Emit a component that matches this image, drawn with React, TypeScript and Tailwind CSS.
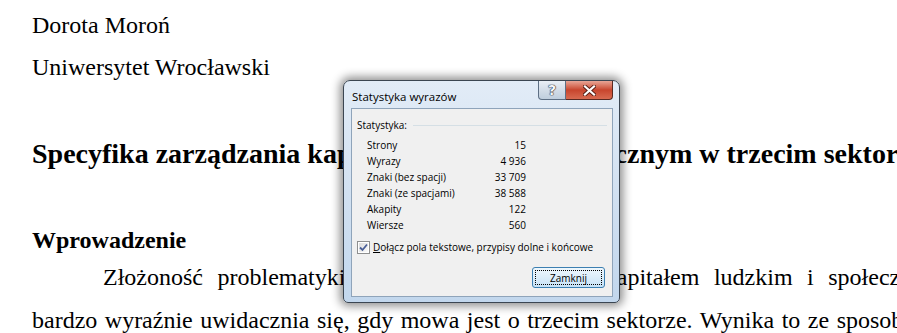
import React from 'react'

const stats = [
  { label: 'Strony', value: '15' },
  { label: 'Wyrazy', value: '4\u00a0936' },
  { label: 'Znaki (bez spacji)', value: '33\u00a0709' },
  { label: 'Znaki (ze spacjami)', value: '38\u00a0588' },
  { label: 'Akapity', value: '122' },
  { label: 'Wiersze', value: '560' },
]

function TitleButtons() {
  return (
    <div className="ml-auto mr-[6px] flex h-[19px]">
      <div className="w-[28px] h-[19px] rounded-bl-[4px] border border-t-0 border-[#5d6f84] bg-gradient-to-b from-[#e9eff6] via-[#d3dde8] to-[#bfcedd] flex items-center justify-center">
        <span className="text-[14px] leading-none font-bold text-[#f4f7fa] [text-shadow:0_0_1px_#223,0_0_1px_#223,0_0_1px_#223] font-['DejaVu_Sans',sans-serif]">?</span>
      </div>
      <div className="w-[47px] h-[19px] rounded-br-[4px] border border-t-0 border-l-0 border-[#5a2a22] bg-gradient-to-b from-[#e8a596] via-[#c8452d] to-[#d86a50] flex items-center justify-center">
        <svg width="13" height="11" viewBox="0 0 13 11">
          <path d="M2 1.5 L11 9.5 M11 1.5 L2 9.5" stroke="#5a1f15" strokeWidth="4" strokeLinecap="square" />
          <path d="M2 1.5 L11 9.5 M11 1.5 L2 9.5" stroke="#ffffff" strokeWidth="2.2" strokeLinecap="square" />
        </svg>
      </div>
    </div>
  )
}

function CheckBox() {
  return (
    <div className="w-[13px] h-[13px] border border-[#8e8f8f] bg-white p-[1px] flex-shrink-0">
      <div className="w-full h-full bg-gradient-to-br from-[#dcdcdc] to-[#fbfbfb] flex items-center justify-center">
        <svg width="9" height="9" viewBox="0 0 9 9">
          <path d="M1 4.5 L3.5 7 L8 1.5" fill="none" stroke="#4a5f97" strokeWidth="1.8" />
        </svg>
      </div>
    </div>
  )
}

function WordCountDialog() {
  return (
    <div className="absolute left-[343px] top-[80px] w-[277px] h-[223px] rounded-t-[7px] rounded-b-[5px] border border-[#3b4652] bg-gradient-to-b from-[#e2ecf7] via-[#d2e1f1] to-[#c2d7ed] shadow-[0_0_10px_3px_rgba(0,0,0,0.45)] flex flex-col font-['Open_Sans',sans-serif] text-black">
      <div className="h-[27px] flex items-start pl-[8px]">
        <span className="mt-[8px] text-[11.5px] leading-[16px]">Statystyka wyrazów</span>
        <TitleButtons />
      </div>
      <div className="ml-[7px] mr-[6px] mb-[5px] flex-1 border border-[#8fa4ba] bg-[#f0f0f0] flex flex-col text-[10px] whitespace-nowrap">
        {/* Group header */}
        <div className="pt-[8px] pl-[5px] pr-[5px] flex items-center gap-[6px] leading-[16px]">
          <span>Statystyka:</span>
          <div className="flex-1 h-px bg-[#d5dfe5]" />
        </div>

        <div className="mt-[4px] ml-[15px] w-[159px] grid grid-cols-[1fr_auto] leading-[16px]">
          {stats.map((s) => (
            <React.Fragment key={s.label}>
              <span>{s.label}</span>
              <span className="text-right">{s.value}</span>
            </React.Fragment>
          ))}
        </div>

        <div className="mt-[6px] pl-[5px] flex items-center gap-[3px] leading-[16px]">
          <CheckBox />
          <span>
            <span className="underline">D</span>ołącz pola tekstowe, przypisy dolne i końcowe
          </span>
        </div>

        <div className="mt-[12px] pr-[7px] flex justify-end">
          <div className="w-[73px] h-[21px] rounded-[3px] border border-[#3c7fb1] bg-gradient-to-b from-[#eef7fd] via-[#dcedf9] to-[#c6e2f7] p-[2px]">
            <div className="w-full h-full border border-dotted border-black flex items-center justify-center leading-none">
              Zamknij
            </div>
          </div>
        </div>
      </div>
    </div>
  )
}

function Document() {
  return (
    <div className="pl-[32px] pt-[4px] whitespace-nowrap text-black font-['Liberation_Serif','Times_New_Roman',serif]">
      <p className="text-[24px] leading-[42px]">Dorota Moroń</p>
      <p className="text-[24px] leading-[42px]">Uniwersytet Wrocławski</p>
      <h1 className="mt-[45px] text-[28px] leading-[42px] font-bold">
        Specyfika zarządzania kapitałem ludzkim i społecznym w trzecim sektorze
      </h1>
      <h2 className="mt-[44px] text-[24px] leading-[42px] font-bold">Wprowadzenie</h2>
      <p className="-mt-[5px] pl-[71px] text-[24px] leading-[43px] [word-spacing:8.5px]">
        Złożoność problematyki dotyczącej zarządzania kapitałem ludzkim i społecznym w organizacjach
      </p>
      <p className="text-[24px] leading-[43px] [word-spacing:1.5px]">
        bardzo wyraźnie uwidacznia się, gdy mowa jest o trzecim sektorze. Wynika to ze sposobu
      </p>
    </div>
  )
}

export default function App() {
  return (
    <div className="relative w-[897px] h-[333px] overflow-hidden bg-white">
      <Document />
      <WordCountDialog />
    </div>
  )
}
